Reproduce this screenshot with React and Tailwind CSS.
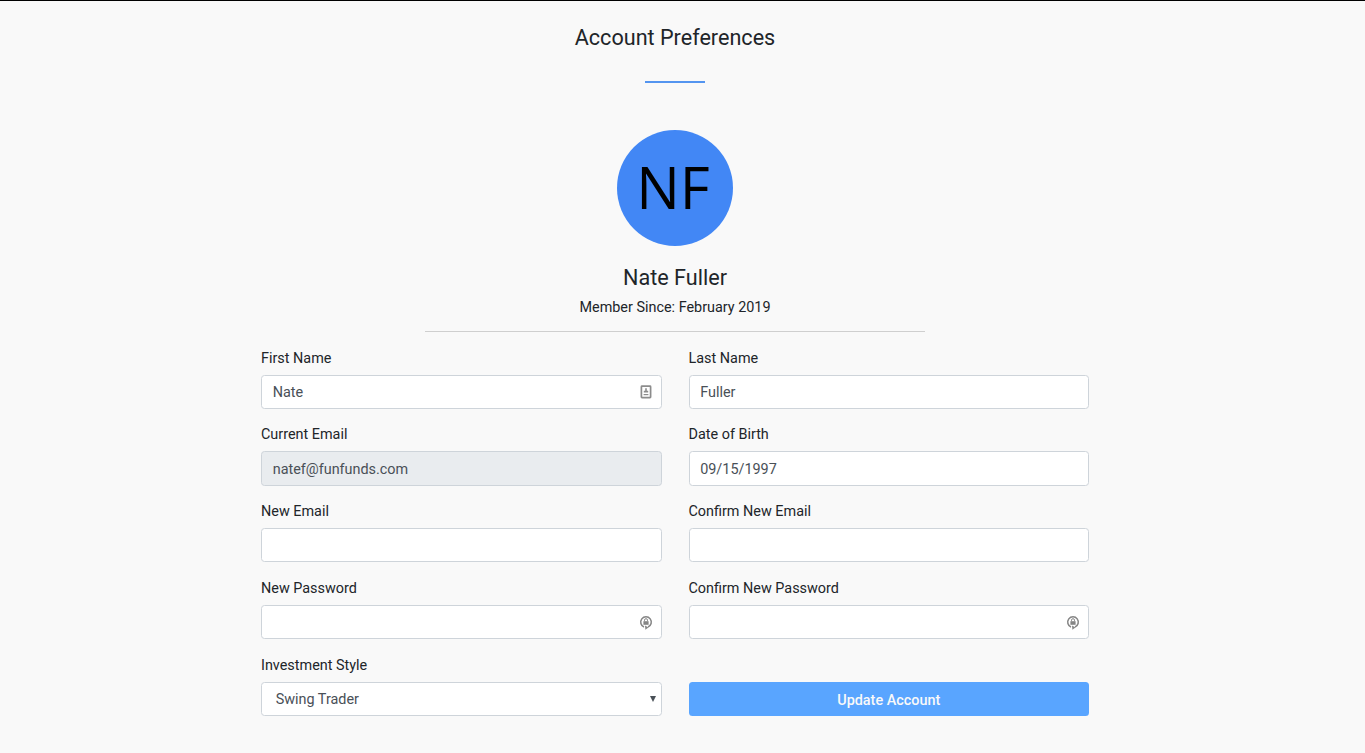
import React from 'react';

function ContactIcon() {
  return (
    <svg className="h-[14px] w-[12px]" viewBox="0 0 12 14" fill="none">
      <rect x="1.4" y="1.2" width="9.2" height="11.4" rx="0.6" stroke="#8c8c8c" strokeWidth="1.7" />
      <path d="M5.2 3.2h1.6v2.6h1.4v1.6H3.8V5.8h1.4z" fill="#8c8c8c" />
      <path d="M3.6 9h4.8v1.2H3.6z" fill="#8c8c8c" />
    </svg>
  );
}

function KeyIcon() {
  return (
    <svg className="h-[15px] w-[14px]" viewBox="0 0 14 15" fill="none">
      <path d="M5 12A5.3 5.3 0 1 1 9 12" stroke="#858585" strokeWidth="1.5" />
      <path d="M6 10.6l3.4 2-3 2.2z" fill="#858585" />
      <rect x="4.4" y="6.2" width="5.2" height="3.6" fill="#858585" />
      <path d="M5.5 6.2V5.2a1.5 1.5 0 0 1 3 0v1" stroke="#858585" strokeWidth="1" />
    </svg>
  );
}

const boxClass =
  'flex h-[34.2px] items-center justify-between rounded-[3.5px] border border-[#ced4da] pl-[10.7px] text-[#495057]';

function Field({ label, value, icon, disabled }) {
  return (
    <div className="h-[76.8px]">
      <div className="mb-[7.1px] h-[21.4px] pt-[0.5px] leading-[23.4px] text-[#212529]">{label}</div>
      <div className={`${boxClass} ${disabled ? 'bg-[#e9ecef]' : 'bg-white'}`}>
        <span className="pt-[2px]">{value}</span>
        {icon && <span className="mr-[8px]">{icon}</span>}
      </div>
    </div>
  );
}

export default function App() {
  return (
    <main className="h-[753px] overflow-hidden border-t border-black bg-[#f9f9f9] pr-[15px] font-['Roboto',sans-serif] text-[14.4px] text-[#212529]">
      <header className="flex flex-col items-center">
        <h1 className="mt-[23px] h-[28px] text-[21.6px] leading-[28px]">Account Preferences</h1>
        <div className="mt-[29px] h-[2px] w-[60px] bg-[#5495f0]" />
        <div className="mt-[47px] flex size-[116px] items-center justify-center rounded-full bg-[#4287f5] pr-[4px] pb-[2px] font-['Open_Sans',sans-serif] text-[58px] leading-none text-black">
          NF
        </div>
        <h2 className="mt-[18px] h-[28px] text-[21.6px] leading-[28px]">Nate Fuller</h2>
        <p className="mt-[5px] h-[22px] leading-[22px]">Member Since: February 2019</p>
        <div className="mt-[12px] h-px w-[500px] bg-[#cfcfcf]" />
      </header>
      <form className="mx-auto mt-[14.1px] grid w-[828px] grid-cols-2 gap-x-[27px]">
        <Field label="First Name" value="Nate" icon={<div className="mr-px"><ContactIcon /></div>} />
        <Field label="Last Name" value="Fuller" />
        <Field label="Current Email" value="natef@funfunds.com" disabled />
        <Field label="Date of Birth" value="09/15/1997" />
        <Field label="New Email" />
        <Field label="Confirm New Email" />
        <Field label="New Password" icon={<KeyIcon />} />
        <Field label="Confirm New Password" icon={<KeyIcon />} />
        <div>
          <div className="mb-[7.1px] h-[21.4px] pt-[0.5px] leading-[23.4px]">Investment Style</div>
          <div className={`${boxClass} bg-white`}>
            <span className="pt-[1.4px] pl-[3px]">Swing Trader</span>
            <svg className="mr-[5px] h-[6px] w-[6px]" viewBox="0 0 6 6">
              <path d="M0 0h6L3 6z" fill="#495057" />
            </svg>
          </div>
        </div>
        <button
          type="button"
          className="mt-[28.5px] h-[34.2px] rounded-[3.5px] bg-[#59a5ff] pt-[3px] font-medium text-[#f9f9f9]"
        >
          Update Account
        </button>
      </form>
    </main>
  );
}
